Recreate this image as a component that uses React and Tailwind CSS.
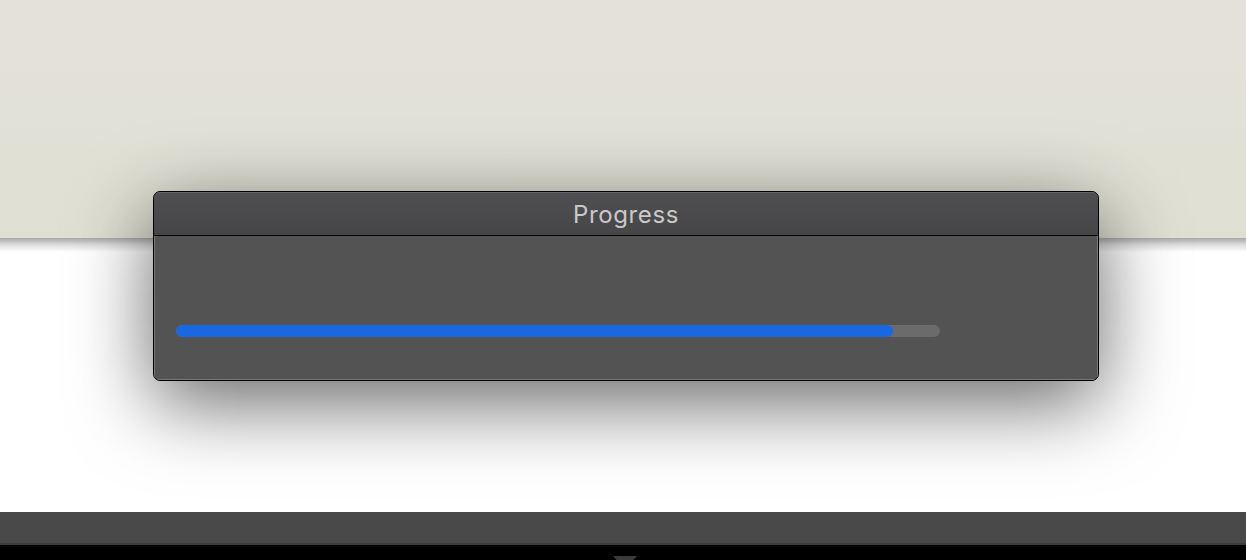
export default function App() {
  return (
    <div className="relative w-[1246px] h-[560px] overflow-hidden bg-black" style={{ fontFamily: "Inter, 'Open Sans', 'Liberation Sans', sans-serif" }}>
      <div className="flex flex-col h-full">
        <div className="h-[238px] bg-gradient-to-b from-[#e4e1da] via-[#e2e1d7] to-[#dfdfd2]" />
        <div className="relative h-[274px] bg-white">
          <div className="absolute inset-x-0 top-0 h-[14px] bg-gradient-to-b from-[#a9a9a9] via-[#dedede] to-white" />
        </div>
        <div className="h-[33px] bg-[#494949] border-b-[2px] border-[#3b3b3b]" />
        <div className="relative flex-1 bg-black">
          <div className="absolute left-[613px] bottom-0 w-[24px] h-[4px] bg-[#3a3a3a] [clip-path:polygon(0_0,100%_0,85%_100%,15%_100%)]" />
        </div>
      </div>

      <div className="absolute left-[153px] top-[191px] w-[946px] h-[190px] rounded-[7px] border border-black bg-[#535353] shadow-[0_22px_80px_rgba(0,0,0,0.6)] overflow-hidden flex flex-col">
        <div className="h-[44px] flex items-center justify-center pt-[2px] bg-gradient-to-b from-[#4f4f51] to-[#464649] border-b border-black shadow-[inset_0_1px_0_rgba(255,255,255,0.12)]">
          <span className="text-[24px] text-[#c9c9c9] tracking-[0.6px] leading-none">Progress</span>
        </div>
        <div className="flex-1 flex flex-col justify-start pt-[89px] px-[22px] shadow-[inset_1px_0_0_#787878,inset_-1px_0_0_#787878,inset_0_-1px_0_#787878]">
          <div className="w-[764px] h-[12px] rounded-full bg-[#6b6b6b] overflow-hidden">
            <div className="h-full rounded-full bg-[#1868e2]" style={{ width: `${(717 / 764) * 100}%` }} />
          </div>
        </div>
      </div>
    </div>
  );
}
